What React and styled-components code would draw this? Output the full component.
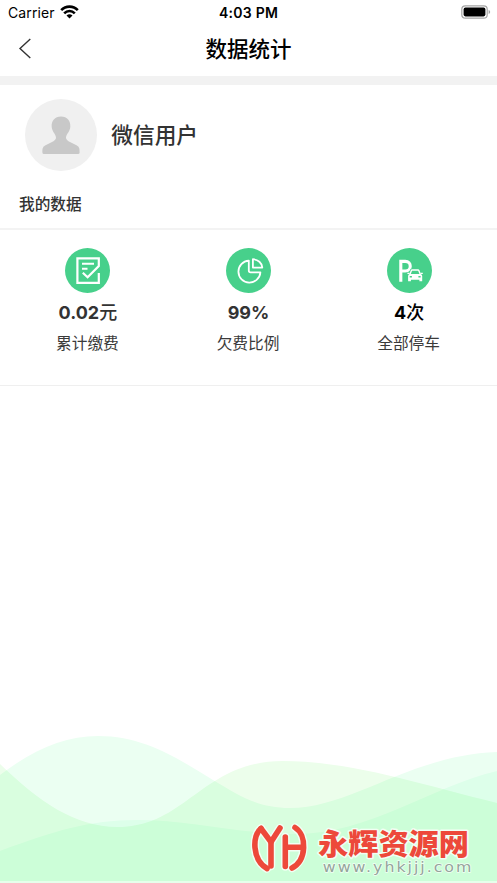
import React from "react";
import styled, { createGlobalStyle } from "styled-components";

const GlobalStyle = createGlobalStyle`
  * { box-sizing: border-box; }
  body { margin: 0; background: #fff; }
`;

const Screen = styled.div`
  position: relative;
  display: flex;
  flex-direction: column;
  width: 497px;
  height: 883px;
  overflow: hidden;
  background: #fff;
  color: #333;
  font-family: Inter, "Noto Sans CJK SC", sans-serif;
`;

const StatusBar = styled.div`
  display: grid;
  grid-template-columns: 1fr auto 1fr;
  align-items: center;
  height: 26px;
  padding: 0 6px 0 8px;
  color: #000;
  font-size: 14px;
  line-height: 26px;
`;

const Carrier = styled.div`
  display: flex;
  align-items: center;
  gap: 5px;
  letter-spacing: 0.1px;
`;

const Clock = styled.div`
  margin-right: 2px;
  font-weight: 600;
  letter-spacing: 0.25px;
`;

const Battery = styled.svg`
  justify-self: end;
  margin-bottom: 2px;
`;

const WifiIcon = styled.svg`
  margin-bottom: 2px;
`;

const NavBar = styled.header`
  display: grid;
  grid-template-columns: 50px 1fr 50px;
  align-items: center;
  height: 50px;
  padding-bottom: 5px;
`;

const BackIcon = styled.svg`
  margin-left: 18px;
`;

const Title = styled.h1`
  margin: 0;
  color: #000;
  font-size: 21.5px;
  font-weight: 500;
  line-height: 30px;
  text-align: center;
`;

const Divider = styled.div`
  flex: none;
  height: ${(p) => p.$size}px;
  background: ${(p) => p.$color};
`;

const Profile = styled.section`
  display: flex;
  align-items: center;
  gap: 14px;
  height: 100px;
  padding-left: 25.3px;
`;

const UserName = styled.div`
  font-size: 21.7px;
  font-weight: 500;
  line-height: 32px;
`;

const SectionTitle = styled.h2`
  height: 43px;
  margin: 0;
  padding: 8px 0 0 19px;
  font-size: 15.7px;
  font-weight: 500;
  line-height: 24px;
`;

const Stats = styled.section`
  display: grid;
  grid-template-columns: repeat(3, 160.6px);
  justify-content: center;
  height: 155px;
  padding-top: 18px;
`;

const Stat = styled.div`
  display: flex;
  flex-direction: column;
  align-items: center;
`;

const Value = styled.div`
  margin-top: 7px;
  color: ${(p) => p.$color};
  font-size: 18px;
  font-weight: 650;
  line-height: 26px;
`;

const Unit = styled.span`
  font-weight: 500;
`;

const Label = styled.div`
  margin: 5px 1px 0 0;
  color: #3a3a3a;
  font-size: 15.7px;
  line-height: 25px;
`;

const Waves = styled.svg`
  display: block;
  flex: none;
  margin-top: auto;
  isolation: isolate;
  path { mix-blend-mode: multiply; }
`;

const Watermark = styled.svg`
  position: absolute;
  right: 20px;
  bottom: 2px;
`;

const Wifi = () => (
  <WifiIcon width="19" height="14" viewBox="0 0 19 14" fill="none" stroke="#000" strokeWidth="2.6">
    <path d="M1.2 5.1C5.8 .4 13.2 .4 17.8 5.1" />
    <path d="M4.2 8.3C7.2 5.3 11.8 5.3 14.8 8.3" />
    <path d="M6.5 10.4Q9.5 7.9 12.5 10.4L9.5 13.5Z" fill="#000" stroke="none" />
  </WifiIcon>
);

const Avatar = () => (
  <svg width="72" height="72" viewBox="0 0 72 72">
    <circle cx="36" cy="36" r="36" fill="#f0f0f0" />
    <path
      fill="#c8c8c8"
      d="M36 17.6C29.8 17.6 26.2 22.2 26.7 28C27 32.4 30.8 35.2 31 38.4C31.2 40.4 29.5 41.6 26.5 43.2L20.5 46.2C17.3 47.9 17.4 50 17.4 53.5Q17.4 55 19 55H53Q54.6 55 54.6 53.5C54.6 50 54.7 47.9 51.5 46.2L45.5 43.2C42.5 41.6 40.8 40.4 41 38.4C41.2 35.2 45 32.4 45.3 28C45.8 22.2 42.2 17.6 36 17.6Z"
    />
  </svg>
);

const Badge = ({ children }) => (
  <svg width="45" height="45" viewBox="0 0 45 45" fill="none" stroke="#fff">
    <circle cx="22.5" cy="22.5" r="22.5" fill="#47d08b" stroke="none" />
    {children}
  </svg>
);

const BillIcon = () => (
  <Badge>
    <path d="M33.8 25V34.8H12.4V10.4H33.8V18L22.6 29.3L17.8 24.8" strokeWidth="2.2" />
    <path d="M17 15.8H29M17 20.8H22.5" strokeWidth="2" />
  </Badge>
);

const PieIcon = () => (
  <Badge>
    <g strokeWidth="1.8" strokeLinejoin="round">
      <path d="M22.8 12.6A11 11 0 1 0 34.4 24.3H24.6Q22.8 24.3 22.8 22.5Z" />
      <path d="M26.9 11.2V19.6H36.3C36 15 32 11.4 26.9 11.2Z" />
    </g>
  </Badge>
);

const ParkingIcon = () => (
  <Badge>
    <path d="M13.8 33.8V13.4H18.3C24.9 13.4 24.9 23 18.3 23H14" strokeWidth="3.1" />
    <path d="M24.2 21.6H32L34.4 26.3L35 28V33H21V28L21.8 26.3Z" fill="#47d08b" stroke="#47d08b" strokeWidth="1.6" />
    <path d="M22.9 26.4L24.4 22.5Q24.6 22 25.2 22H31Q31.6 22 31.8 22.5L33.4 26.4" strokeWidth="1.4" />
    <path d="M20.4 25.3H22.6M33.6 25.3H35.8" strokeWidth="1.2" />
    <path
      fill="#fff"
      stroke="none"
      fillRule="evenodd"
      d="M22.6 26H33.7Q35.2 26.4 35.2 28V33.3H32.4V31.7H23.9V33.3H21.1V28Q21.1 26.4 22.6 26ZM22.7 28.1V29.6H24.9V28.1ZM31.4 28.1V29.6H33.6V28.1Z"
    />
  </Badge>
);

const YH_STROKES = [
  "M261 828.5C252 835 252 860 267 868.5",
  "M261 828.5L271 842L280 828",
  "M271 842V866",
  "M285.3 837V866.5",
  "M286 847.2H303",
  "M295 827.5C307 835 307 860 292 868",
];

const SiteMark = () => (
  <Watermark width="229" height="66" viewBox="248 815 229 66">
    {[["#f2fff4", 8.4], ["#ed493a", 5.6]].map(([color, width]) => (
      <g key={color} fill="none" stroke={color} strokeWidth={width} strokeLinecap="round" strokeLinejoin="round">
        {YH_STROKES.map((d) => <path key={d} d={d} />)}
      </g>
    ))}
    <g stroke="#f2fff4" strokeLinejoin="round" paintOrder="stroke">
      <text
        x="318" y="854.5" textLength="151" lengthAdjust="spacingAndGlyphs" fill="#ed493a" strokeWidth="3"
        fontFamily='"Noto Sans CJK SC", sans-serif' fontSize="29" fontWeight="900"
      >
        永辉资源网
      </text>
      <text
        x="275.9" y="872" textLength="127" fill="#94a59b" strokeWidth="1.4" transform="scale(1.17 1)"
        fontFamily='"DejaVu Sans", sans-serif' fontSize="13.5"
      >
        www.yhkjjj.com
      </text>
    </g>
  </Watermark>
);

const STATS = [
  { icon: BillIcon, value: "0.02", unit: "元", label: "累计缴费", color: "#333" },
  { icon: PieIcon, value: "99%", unit: "", label: "欠费比例", color: "#333" },
  { icon: ParkingIcon, value: "4", unit: "次", label: "全部停车", color: "#000" },
];

export default function App() {
  return (
    <Screen>
      <GlobalStyle />
      <StatusBar>
        <Carrier>Carrier <Wifi /></Carrier>
        <Clock>4:03 PM</Clock>
        <Battery width="30" height="14" viewBox="0 0 30 14">
          <rect x=".8" y=".8" width="25.4" height="12.4" rx="3.5" fill="#fff" stroke="#a5a5a5" strokeWidth="1.2" />
          <rect x="2.6" y="2.6" width="21.8" height="8.8" rx="1.8" />
          <path d="M27.6 5Q29.2 5.5 29.2 7T27.6 9Z" fill="#a5a5a5" />
        </Battery>
      </StatusBar>
      <NavBar>
        <BackIcon width="14" height="21" viewBox="0 0 14 21" fill="none" stroke="#333" strokeWidth="1.4">
          <path d="M12.3 1L2 10.5L12.3 20" />
        </BackIcon>
        <Title>数据统计</Title>
      </NavBar>
      <Divider $size={9} $color="#f2f2f2" />
      <Profile>
        <Avatar />
        <UserName>微信用户</UserName>
      </Profile>
      <SectionTitle>我的数据</SectionTitle>
      <Divider $size={2} $color="#f3f3f3" />
      <Stats>
        {STATS.map(({ icon: Icon, value, unit, label, color }) => (
          <Stat key={label}>
            <Icon />
            <Value $color={color}>{value}<Unit>{unit}</Unit></Value>
            <Label>{label}</Label>
          </Stat>
        ))}
      </Stats>
      <Divider $size={1} $color="#efefef" />
      <Waves width="497" height="149" viewBox="0 734 497 149">
        <path fill="#ebfff2" d="M0 775C34 749 65 736 98 736C147 736 181 761 213 780C240 796 258 808 290 808C352 808 410 755 497 752V881H0Z" />
        <path fill="#ecfeeb" d="M0 764C38 801 75 827 117 827C187 827 202 761 283 761C350 761 420 784 497 803V881H0Z" />
        <path fill="#f0fff7" d="M0 851C54 831 89 820 137 820C190 820 236 834 295 834C370 834 430 787 497 771V881H0Z" />
        <path fill="#e6ffeb" d="M0 881H497V883H0Z" />
      </Waves>
      <SiteMark />
    </Screen>
  );
}
